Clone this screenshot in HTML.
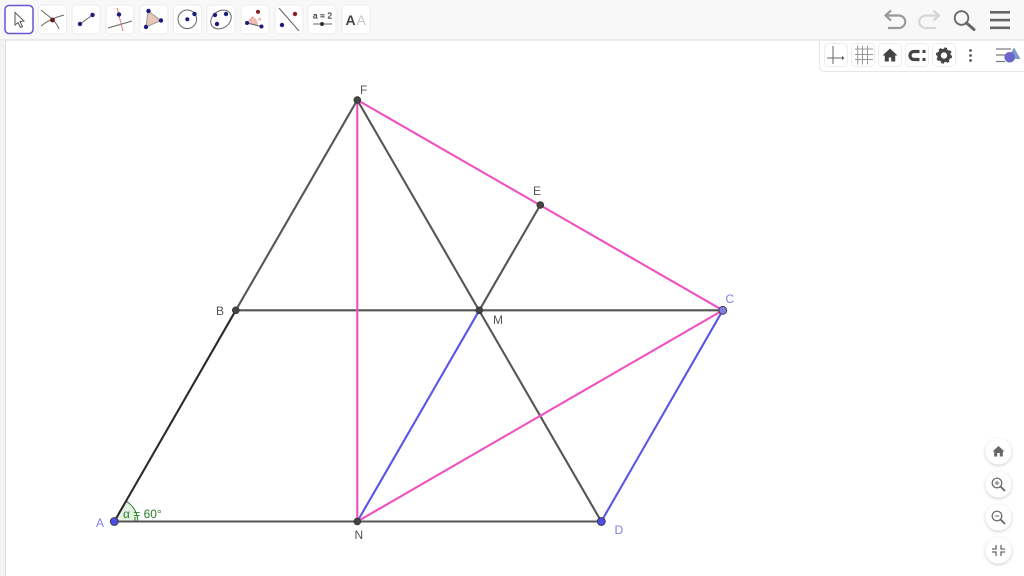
<!DOCTYPE html>
<html><head><meta charset="utf-8"><style>
html,body{margin:0;padding:0;background:#fff;width:1024px;height:576px;overflow:hidden;font-family:"Liberation Sans",sans-serif}
svg{position:absolute;left:0;top:0}
text{font-family:"Liberation Sans",sans-serif}
</style></head><body>
<svg width="1024" height="576" viewBox="0 0 1024 576">
<defs>
<filter id="s" x="-30%" y="-30%" width="160%" height="160%"><feDropShadow dx="0" dy="1" stdDeviation="1.5" flood-color="#000" flood-opacity=".22"/></filter>
</defs>
<!-- bars -->
<rect x="0" y="0" width="1024" height="40" fill="#f8f8f8"/>
<rect x="0" y="39.5" width="1024" height="1" fill="#dcdcdc"/>
<rect x="0" y="40" width="5" height="536" fill="#f3f3f3"/>
<rect x="5" y="40" width="1" height="536" fill="#dcdcdc"/>
<!-- toolbar buttons -->
<g fill="#fff" stroke="#ededed">
<rect x="38.5" y="5" width="28" height="29" rx="4"/>
<rect x="72" y="5" width="28" height="29" rx="4"/>
<rect x="106" y="5" width="28" height="29" rx="4"/>
<rect x="140" y="5" width="28" height="29" rx="4"/>
<rect x="173.500" y="5" width="28" height="29" rx="4"/>
<rect x="207" y="5" width="28" height="29" rx="4"/>
<rect x="241" y="5" width="28" height="29" rx="4"/>
<rect x="275" y="5" width="28" height="29" rx="4"/>
<rect x="308" y="5" width="28" height="29" rx="4"/>
<rect x="342" y="5" width="28" height="29" rx="4"/>
</g>
<rect x="5" y="5.500" width="28" height="28" rx="4" fill="#fff" stroke="#6557d2" stroke-width="1.500"/>
<!-- move -->
<path d="M15 12.500V25l3-2.500 2.500 5 2-1-2.500-5 4-.5z" fill="#fff" stroke="#555" stroke-width="1"/>
<!-- point on intersect -->
<path d="M41 10c6 5 12 9 14 12s3 4 4 7" fill="none" stroke="#666"/>
<path d="M41 26c6-5 15-9 23-11" fill="none" stroke="#666"/>
<circle cx="52.500" cy="20" r="2.400" fill="#6b1c1c"/>
<!-- line segment -->
<line x1="80" y1="24" x2="92.500" y2="15" stroke="#666"/>
<circle cx="80" cy="24" r="2.200" fill="#1c1c80"/><circle cx="92.500" cy="15" r="2.200" fill="#1c1c80"/>
<!-- perpendicular -->
<line x1="108" y1="28" x2="132" y2="21" stroke="#666"/>
<line x1="117" y1="8" x2="123" y2="31" stroke="#e87878"/>
<circle cx="119" cy="14.500" r="2.200" fill="#1c1c80"/>
<!-- polygon -->
<path d="M148 11 L161 20.500 L146 27z" fill="#e8c8b4" stroke="#999"/>
<circle cx="148.500" cy="11" r="2.200" fill="#1c1c80"/><circle cx="161" cy="20.500" r="2.200" fill="#1c1c80"/><circle cx="146" cy="27" r="2.200" fill="#1c1c80"/>
<!-- circle -->
<circle cx="187.300" cy="19.300" r="9.300" fill="none" stroke="#666"/>
<circle cx="187.300" cy="19.300" r="2" fill="#1c1c80"/><circle cx="194.500" cy="14" r="2.200" fill="#1c1c80"/>
<!-- conic -->
<ellipse cx="221" cy="19.500" rx="11" ry="8.500" transform="rotate(-35 221 19.500)" fill="none" stroke="#666"/>
<circle cx="215" cy="15" r="2.200" fill="#1c1c80"/><circle cx="226" cy="14" r="2.200" fill="#1c1c80"/><circle cx="217" cy="24" r="2.200" fill="#1c1c80"/>
<!-- angle -->
<path d="M247 23 L258 25.500 A10 10 0 0 0 253 16.500z" fill="#f2bcb4"/>
<line x1="247" y1="23" x2="261.500" y2="26.500" stroke="#666"/>
<line x1="247" y1="23" x2="253" y2="16.500" stroke="#e0a0a0"/>
<circle cx="247" cy="23" r="2" fill="#1c1c80"/><circle cx="261.500" cy="26.500" r="2" fill="#1c1c80"/>
<circle cx="258" cy="11.800" r="2.100" fill="#8b1c2c"/>
<text x="258" y="24" font-size="8" fill="#c44">°</text>
<!-- reflect -->
<line x1="279" y1="8" x2="299" y2="31" stroke="#666"/>
<circle cx="295" cy="14" r="2.200" fill="#8b1c2c"/><circle cx="282" cy="25" r="2.200" fill="#1c1c80"/>
<!-- slider -->
<text x="322.500" y="18.500" font-size="8.500" fill="#333" text-anchor="middle" stroke="#333" stroke-width=".2">a = 2</text>
<line x1="313" y1="24" x2="332" y2="24" stroke="#666"/>
<circle cx="322" cy="24" r="2" fill="#333"/>
<!-- text -->
<text x="345.500" y="25" font-size="14" font-weight="bold" fill="#444">A</text>
<text x="356.500" y="25" font-size="14" fill="#c4c4c4">A</text>

<!-- undo/redo -->
<path d="M887 15.500H898.500a6.500 6 0 0 1 0 12.500H888" fill="none" stroke="#999" stroke-width="2.200"/>
<path d="M891 10.500L885.500 15.500 891 20.500" fill="none" stroke="#999" stroke-width="2.200"/>
<path d="M937.500 15.500H926a6.500 6 0 0 0 0 12.500H936" fill="none" stroke="#d6d6d6" stroke-width="2.200"/>
<path d="M933.500 10.500L939 15.500 933.500 20.500" fill="none" stroke="#d6d6d6" stroke-width="2.200"/>
<!-- search -->
<circle cx="961.500" cy="18" r="6.800" fill="none" stroke="#666" stroke-width="1.800"/>
<line x1="966.500" y1="23" x2="974" y2="29.500" stroke="#666" stroke-width="3" stroke-linecap="round"/>
<!-- menu -->
<g fill="#666"><rect x="990" y="11" width="20" height="2.600"/><rect x="990" y="18.800" width="20" height="2.600"/><rect x="990" y="26.500" width="20" height="2.600"/></g>

<!-- style bar -->
<path d="M1024 71.500H824a4.500 4.500 0 0 1-4.500-4.500V40" fill="#fff" stroke="#e6e6e6"/>
<g fill="#fff" stroke="#ededed">
<rect x="824.500" y="43.500" width="23" height="23" rx="4"/>
<rect x="851.500" y="43.500" width="23" height="23" rx="4"/>
<rect x="878.500" y="43.500" width="23" height="23" rx="4"/>
<rect x="905.500" y="43.500" width="23" height="23" rx="4"/>
<rect x="932.500" y="43.500" width="23" height="23" rx="4"/>
</g>
<path d="M833 46v18M827 58h17" stroke="#666" fill="none"/><path d="M842 56l2.500 2-2.500 2z" fill="#555"/>
<path d="M857.700 45.500v19M862.500 45.500v19M867.500 45.500v19M855 49h18M855 54.500h18M855 59.500h18" stroke="#999" stroke-width="1" fill="none"/>
<path d="M890 48.500l-7.500 7h2.300v6h4v-4h2.400v4h4v-6h2.300z" fill="#444"/>
<path d="M919.500 51.500h-5.500a4 4 0 0 0 0 8h5.500" fill="none" stroke="#444" stroke-width="3.200"/>
<rect x="922.500" y="50" width="3" height="3" fill="#444"/><rect x="922.500" y="58" width="3" height="3" fill="#444"/>
<circle cx="944" cy="55.500" r="5" fill="none" stroke="#444" stroke-width="3.600"/>
<circle cx="944" cy="55.500" r="7" fill="none" stroke="#444" stroke-width="2.200" stroke-dasharray="2.700 2.800"/>
<g fill="#555"><circle cx="970.500" cy="50.500" r="1.400"/><circle cx="970.500" cy="55.500" r="1.400"/><circle cx="970.500" cy="60.500" r="1.400"/></g>
<g stroke="#777" stroke-width="1.200"><line x1="996" y1="49" x2="1011" y2="49"/><line x1="996" y1="55" x2="1006" y2="55"/><line x1="996" y1="61.500" x2="1005" y2="61.500"/></g>
<path d="M1014 47.500L1020.500 59H1007.500z" fill="#7f9bc8"/>
<circle cx="1009.700" cy="57.300" r="5.300" fill="#6a66c8"/>

<!-- geometry -->
<path d="M114.300 521.500L126 501.200A23.500 23.500 0 0 1 137.800 521.500z" fill="#e4f2e4" stroke="#2e7d2e" stroke-width="1"/>
<line x1="135" y1="517" x2="135" y2="521" stroke="#2e7d2e"/>
<g fill="none" stroke-width="2.100" stroke-linecap="round">
<path d="M235.800 310.300L357.300 100M357.300 100L601.300 521.500M114.300 521.500H601.300M235.800 310.300H722.800M479.300 310.300L540.300 205" stroke="#555"/>
<path d="M114.300 521.500L235.800 310.300" stroke="#2a2a2a"/>
<path d="M357.300 521.500L479.300 310.300M601.300 521.500L722.800 310.300" stroke="#5a55e6"/>
<path d="M357.300 521.500V100M357.300 100L722.800 310.300L357.300 521.500" stroke="#f04fc0"/>
</g>
<g stroke="#333" stroke-width=".8" fill="#444">
<circle cx="235.800" cy="310.300" r="3.400"/><circle cx="357.300" cy="100" r="3.400"/><circle cx="540.300" cy="205" r="3.400"/><circle cx="479.300" cy="310.300" r="3.400"/><circle cx="357.300" cy="521.500" r="3.400"/>
</g>
<g stroke="#333" stroke-width=".8">
<circle cx="114.300" cy="521.500" r="4" fill="#4d4de6"/><circle cx="601.300" cy="521.500" r="4" fill="#4d4de6"/><circle cx="722.800" cy="310.300" r="4" fill="#7d7de0"/>
</g>
<g font-size="12" fill="#555">
<text x="360" y="94">F</text><text x="533" y="195">E</text><text x="216" y="315">B</text><text x="493" y="324">M</text><text x="354.500" y="539">N</text>
</g>
<g font-size="12" fill="#7d7de6">
<text x="725.500" y="303">C</text><text x="96" y="527">A</text><text x="614.500" y="534">D</text>
</g>
<text x="123" y="518" font-size="12" fill="#2e7d2e">α = 60°</text>

<!-- zoom buttons -->
<g fill="#fff" filter="url(#s)">
<circle cx="998.500" cy="451.500" r="13"/><circle cx="998.500" cy="484.500" r="13"/><circle cx="998.500" cy="517.500" r="13"/><circle cx="998.500" cy="550.500" r="13"/>
</g>
<path d="M998.500 446l-6 5.500h1.700v5h3v-3.500h2.600v3.500h3v-5h1.700z" fill="#666"/>
<g fill="none" stroke="#666">
<circle cx="997" cy="483" r="4.800" stroke-width="1.200"/><path d="M1000.500 486.500l4.500 4.500" stroke-width="1.800"/><path d="M994.800 483h4.400M997 480.800v4.400"/>
<circle cx="997" cy="516" r="4.800" stroke-width="1.200"/><path d="M1000.500 519.500l4.500 4.500" stroke-width="1.800"/><path d="M994.800 516h4.400"/>
<path d="M996 545v4h-4M1001 545v4h4M996 556v-4h-4M1001 556v-4h4" stroke-width="1.300"/>
</g>
</svg>
</body></html>
